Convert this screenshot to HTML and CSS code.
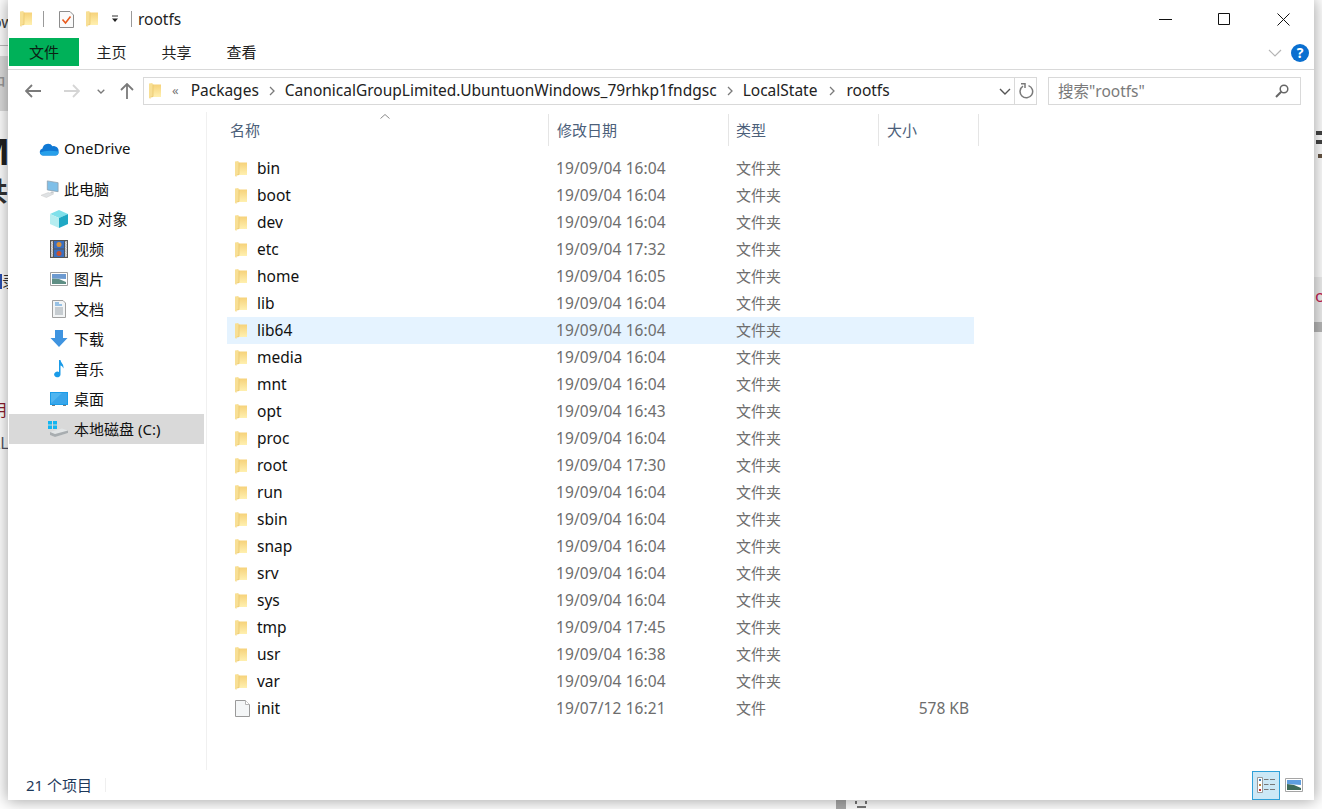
FILE: index.html
```html
<!DOCTYPE html>
<html lang="zh-CN">
<head>
<meta charset="UTF-8">
<title>rootfs</title>
<link rel="stylesheet" href="styles.css">
</head>
<body>

<svg class="defs" width="0" height="0">
    <defs>
        <linearGradient id="folder-fill" x1="0" y1="0" x2="0" y2="1">
            <stop offset="0" stop-color="#f6d27a"/>
            <stop offset="1" stop-color="#fff0b0"/>
        </linearGradient>
        <symbol id="i-folder" viewBox="0 0 12 16">
            <path d="M3 1.500H12V14H3z" fill="url(#folder-fill)"/>
            <path d="M0 .5L3.500 0V1.500H4V13.500L1.500 14.200V16L0 15z" fill="#f8df94"/>
            <path d="M4 1.500V13.500L1.500 14.200" fill="none" stroke="#e8c468" stroke-width=".7"/>
        </symbol>
        <symbol id="i-file" viewBox="0 0 15 17">
            <path d="M.5.5H10.500L14.500 4.500V16.500H.5z" fill="#f4f6f7" stroke="#9a9a9a"/>
            <path d="M10.500.5V4.500H14.500" fill="#fff" stroke="#b5b5b5"/>
        </symbol>
    </defs>
</svg>

<div class="desktop">
    <div class="strip strip-left">
        <span class="frag frag-ow">ow</span>
        <span class="frag-line"></span>
        <span class="frag-band">中</span>
        <span class="frag frag-big">M</span>
        <span class="frag frag-bold">共</span>
        <span class="frag frag-blue">录</span>
        <span class="frag frag-red">用</span>
        <span class="frag frag-al">AL</span>
    </div>

    <div class="window">
        <div class="titlebar">
            <svg class="qa-folder"><use href="#i-folder"/></svg>
            <span class="qa-sep qa-sep-a"></span>
            <svg class="qa-check" viewBox="0 0 15 17">
                <path d="M.5.5H11L14.500 4V16.500H.5z" fill="#fafafa" stroke="#8c8c8c"/>
                <path d="M3.500 8.500L6.500 12L11.500 5.500" fill="none" stroke="#e8591c" stroke-width="1.600"/>
            </svg>
            <svg class="qa-folder qa-folder-b"><use href="#i-folder"/></svg>
            <svg class="qa-drop" viewBox="0 0 8 8">
                <path d="M1 1H7" stroke="#333" stroke-width="1"/>
                <path d="M1 3.500H7L4 7z" fill="#222"/>
            </svg>
            <span class="qa-sep qa-sep-b"></span>
            <span class="title-text">rootfs</span>
            <div class="win-buttons">
                <svg class="win-btn" viewBox="0 0 13 13"><path d="M0 6.500H13" stroke="#111"/></svg>
                <svg class="win-btn" viewBox="0 0 13 13"><path d="M.5.5H11.500V11.500H.5z" fill="none" stroke="#111"/></svg>
                <svg class="win-btn" viewBox="0 0 13 13"><path d="M.5.5L12.500 12.500M12.500.5L.5 12.500" stroke="#111"/></svg>
            </div>
        </div>

        <div class="ribbon">
            <div class="tab tab-file">文件</div>
            <div class="tab">主页</div>
            <div class="tab">共享</div>
            <div class="tab">查看</div>
            <svg class="ribbon-chevron" viewBox="0 0 14 8"><path d="M1 1L7 7L13 1" fill="none" stroke="#b5b5b5" stroke-width="1.200"/></svg>
            <div class="help">?</div>
        </div>

        <div class="address-row">
            <div class="nav-arrows">
                <svg class="arrow" viewBox="0 0 16 14"><path d="M1 7H16M7 1L1 7L7 13" fill="none" stroke="#7a7a7a" stroke-width="1.800"/></svg>
                <svg class="arrow arrow-fwd" viewBox="0 0 16 14"><path d="M0 7H15M9 1L15 7L9 13" fill="none" stroke="#d5d5d5" stroke-width="1.800"/></svg>
                <svg class="arrow-down" viewBox="0 0 8 5"><path d="M.7.7L4 4L7.300.7" fill="none" stroke="#7a7a7a" stroke-width="1.300"/></svg>
                <svg class="arrow-up" viewBox="0 0 14 16"><path d="M7 16V1M1 7L7 1L13 7" fill="none" stroke="#7a7a7a" stroke-width="1.800"/></svg>
            </div>
            <div class="address-box">
                <svg class="addr-folder"><use href="#i-folder"/></svg>
                <span class="crumb-more">«</span>
                <span class="crumb">Packages</span>
                <svg class="crumb-sep" viewBox="0 0 6 10"><path d="M1 1L5 5L1 9" fill="none" stroke="#7a7a7a" stroke-width="1.300"/></svg>
                <span class="crumb">CanonicalGroupLimited.UbuntuonWindows_79rhkp1fndgsc</span>
                <svg class="crumb-sep" viewBox="0 0 6 10"><path d="M1 1L5 5L1 9" fill="none" stroke="#7a7a7a" stroke-width="1.300"/></svg>
                <span class="crumb">LocalState</span>
                <svg class="crumb-sep crumb-sep-last" viewBox="0 0 6 10"><path d="M1 1L5 5L1 9" fill="none" stroke="#7a7a7a" stroke-width="1.300"/></svg>
                <span class="crumb">rootfs</span>
                <div class="address-end">
                    <svg class="addr-down" viewBox="0 0 12 7"><path d="M1 1L6 6L11 1" fill="none" stroke="#555" stroke-width="1.400"/></svg>
                    <div class="addr-refresh">
                        <svg viewBox="0 0 16 16" class="refresh-icon">
                            <path d="M5 3.200A6.300 6.300 0 1 0 10.500 2.600" fill="none" stroke="#7a7a7a" stroke-width="1.500"/>
                            <path d="M3 .8H7V5" fill="none" stroke="#7a7a7a" stroke-width="1.500"/>
                        </svg>
                    </div>
                </div>
            </div>
            <div class="search-box">
                <span class="search-text">搜索"rootfs"</span>
                <svg class="search-icon" viewBox="0 0 14 14">
                    <circle cx="9" cy="5" r="3.800" fill="none" stroke="#666" stroke-width="1.500"/>
                    <path d="M6.200 7.800L1 13" stroke="#666" stroke-width="2"/>
                </svg>
            </div>
        </div>

        <div class="main">
            <div class="nav-pane">
                <div class="nav-item nav-top">
                    <svg class="nav-icon" viewBox="0 0 20 14">
                        <path d="M4 13.500A3.500 3.500 0 0 1 3.500 6.600A5.500 5.500 0 0 1 13.500 4.300A4.600 4.600 0 0 1 19.500 9.500A3.600 3.600 0 0 1 16.500 13.500z" fill="#0f78d4"/>
                        <path d="M1 10.500Q7 7.500 19.500 9.500A3.600 3.600 0 0 1 16.500 13.500H4Q2 13.500 1 10.500z" fill="#28a0ea"/>
                    </svg>
                    <span>OneDrive</span>
                </div>
                <div class="nav-item nav-pc">
                    <svg class="nav-icon" viewBox="0 0 20 20">
                        <path d="M7 1L19 3V13L7 11z" fill="#7fbfe8" stroke="#8a9aa8" stroke-width=".8"/>
                        <path d="M12 12.500L14 13V15L10 14.500z" fill="#c5c9cc"/>
                        <path d="M0 17L8 14L14 15.500L6 19.500z" fill="#dfe2e4" stroke="#c8c8c8" stroke-width=".5"/>
                    </svg>
                    <span>此电脑</span>
                </div>
                <div class="nav-item nav-sub">
                    <svg class="nav-icon" viewBox="0 0 18 18">
                        <path d="M9 0L18 4L9 8L0 4z" fill="#7fe0ea"/>
                        <path d="M0 4L9 8V18L0 14z" fill="#b5edf0"/>
                        <path d="M18 4L9 8V18L18 14z" fill="#1fa8c4"/>
                    </svg>
                    <span>3D 对象</span>
                </div>
                <div class="nav-item nav-sub">
                    <svg class="nav-icon" viewBox="0 0 18 18">
                        <path d="M0 0H18V18H0z" fill="#555"/>
                        <path d="M1 1H3V17H1zM15 1H17V17H15z" fill="#d9d9d9" stroke="#555" stroke-width=".4" stroke-dasharray="1.500 1"/>
                        <path d="M4 1H14V8.500H4z" fill="#3a6fc0"/>
                        <path d="M4 9.500H14V17H4z" fill="#3a6fc0"/>
                        <circle cx="9" cy="4.500" r="2.500" fill="#d8913a"/>
                        <circle cx="9" cy="13.500" r="2.500" fill="#c8502f"/>
                    </svg>
                    <span>视频</span>
                </div>
                <div class="nav-item nav-sub">
                    <svg class="nav-icon" viewBox="0 0 18 14">
                        <path d="M.5.5H17.500V13.500H.5z" fill="#fff" stroke="#a0a0a0"/>
                        <path d="M2 2H16V7L2 6.500z" fill="#6d9ad0"/>
                        <path d="M2 6.500L9 7L16 10V12H2z" fill="#5f8f85"/>
                    </svg>
                    <span>图片</span>
                </div>
                <div class="nav-item nav-sub">
                    <svg class="nav-icon" viewBox="0 0 18 18">
                        <path d="M2.500.5H13L15.500 3V17.500H2.500z" fill="#f2f4f5" stroke="#a0a0a0"/>
                        <path d="M5 3H9M5 5H12" stroke="#3d8ed4"/>
                        <path d="M5 8H13M5 10H13M5 12H13M5 14H13" stroke="#9aa4ac"/>
                    </svg>
                    <span>文档</span>
                </div>
                <div class="nav-item nav-sub">
                    <svg class="nav-icon" viewBox="0 0 18 18">
                        <path d="M5 0H13V8H17.500L9 17L.5 8H5z" fill="#3f94e0"/>
                    </svg>
                    <span>下载</span>
                </div>
                <div class="nav-item nav-sub">
                    <svg class="nav-icon" viewBox="0 0 18 18">
                        <path d="M9 0H10.500C10.800 3 14 4 13.500 8.500C12.500 6.500 11.500 5.500 10.500 5.500V14.500A3.200 2.900 0 1 1 9 12z" fill="#1a9be8"/>
                    </svg>
                    <span>音乐</span>
                </div>
                <div class="nav-item nav-sub">
                    <svg class="nav-icon" viewBox="0 0 18 14">
                        <path d="M0 0H18V13H0z" fill="#1b9ce8"/>
                        <path d="M1 1H17V11.500H1z" fill="#4fb5f0"/>
                        <path d="M1 11.500L12 1H17V11.500z" fill="#39a5ea"/>
                        <path d="M2 13H5V14H2zM13 13H16V14H13z" fill="#7a7a7a"/>
                    </svg>
                    <span>桌面</span>
                </div>
                <div class="nav-item nav-sub is-current">
                    <svg class="nav-icon" viewBox="0 0 20 16">
                        <path d="M0 0H4V3.500H0zM5 0H9V3.500H5zM0 4.500H4V8H0zM5 4.500H9V8H5z" fill="#12b5f0"/>
                        <path d="M2 11L14 7.500L20 9.500V12L7 16L2 14z" fill="#e2e5e6"/>
                        <path d="M2 11L7 13L20 9.500V12L7 16L2 14z" fill="#a8adb0"/>
                    </svg>
                    <span>本地磁盘 (C:)</span>
                </div>
            </div>

            <div class="file-list">
                <div class="list-head">
                    <svg class="sort-caret" viewBox="0 0 10 5"><path d="M.5 4.500L5 .5L9.500 4.500" fill="none" stroke="#8a8a8a"/></svg>
                    <div class="head-cell head-name">名称</div>
                    <div class="head-cell head-date">修改日期</div>
                    <div class="head-cell head-type">类型</div>
                    <div class="head-cell head-size">大小</div>
                </div>
                <div class="rows">
                    <div class="row"><div class="c-name"><svg class="row-icon"><use href="#i-folder"/></svg>bin</div><div class="c-date">19/09/04 16:04</div><div class="c-type">文件夹</div><div class="c-size"></div></div>
                    <div class="row"><div class="c-name"><svg class="row-icon"><use href="#i-folder"/></svg>boot</div><div class="c-date">19/09/04 16:04</div><div class="c-type">文件夹</div><div class="c-size"></div></div>
                    <div class="row"><div class="c-name"><svg class="row-icon"><use href="#i-folder"/></svg>dev</div><div class="c-date">19/09/04 16:04</div><div class="c-type">文件夹</div><div class="c-size"></div></div>
                    <div class="row"><div class="c-name"><svg class="row-icon"><use href="#i-folder"/></svg>etc</div><div class="c-date">19/09/04 17:32</div><div class="c-type">文件夹</div><div class="c-size"></div></div>
                    <div class="row"><div class="c-name"><svg class="row-icon"><use href="#i-folder"/></svg>home</div><div class="c-date">19/09/04 16:05</div><div class="c-type">文件夹</div><div class="c-size"></div></div>
                    <div class="row"><div class="c-name"><svg class="row-icon"><use href="#i-folder"/></svg>lib</div><div class="c-date">19/09/04 16:04</div><div class="c-type">文件夹</div><div class="c-size"></div></div>
                    <div class="row is-hover"><div class="c-name"><svg class="row-icon"><use href="#i-folder"/></svg>lib64</div><div class="c-date">19/09/04 16:04</div><div class="c-type">文件夹</div><div class="c-size"></div></div>
                    <div class="row"><div class="c-name"><svg class="row-icon"><use href="#i-folder"/></svg>media</div><div class="c-date">19/09/04 16:04</div><div class="c-type">文件夹</div><div class="c-size"></div></div>
                    <div class="row"><div class="c-name"><svg class="row-icon"><use href="#i-folder"/></svg>mnt</div><div class="c-date">19/09/04 16:04</div><div class="c-type">文件夹</div><div class="c-size"></div></div>
                    <div class="row"><div class="c-name"><svg class="row-icon"><use href="#i-folder"/></svg>opt</div><div class="c-date">19/09/04 16:43</div><div class="c-type">文件夹</div><div class="c-size"></div></div>
                    <div class="row"><div class="c-name"><svg class="row-icon"><use href="#i-folder"/></svg>proc</div><div class="c-date">19/09/04 16:04</div><div class="c-type">文件夹</div><div class="c-size"></div></div>
                    <div class="row"><div class="c-name"><svg class="row-icon"><use href="#i-folder"/></svg>root</div><div class="c-date">19/09/04 17:30</div><div class="c-type">文件夹</div><div class="c-size"></div></div>
                    <div class="row"><div class="c-name"><svg class="row-icon"><use href="#i-folder"/></svg>run</div><div class="c-date">19/09/04 16:04</div><div class="c-type">文件夹</div><div class="c-size"></div></div>
                    <div class="row"><div class="c-name"><svg class="row-icon"><use href="#i-folder"/></svg>sbin</div><div class="c-date">19/09/04 16:04</div><div class="c-type">文件夹</div><div class="c-size"></div></div>
                    <div class="row"><div class="c-name"><svg class="row-icon"><use href="#i-folder"/></svg>snap</div><div class="c-date">19/09/04 16:04</div><div class="c-type">文件夹</div><div class="c-size"></div></div>
                    <div class="row"><div class="c-name"><svg class="row-icon"><use href="#i-folder"/></svg>srv</div><div class="c-date">19/09/04 16:04</div><div class="c-type">文件夹</div><div class="c-size"></div></div>
                    <div class="row"><div class="c-name"><svg class="row-icon"><use href="#i-folder"/></svg>sys</div><div class="c-date">19/09/04 16:04</div><div class="c-type">文件夹</div><div class="c-size"></div></div>
                    <div class="row"><div class="c-name"><svg class="row-icon"><use href="#i-folder"/></svg>tmp</div><div class="c-date">19/09/04 17:45</div><div class="c-type">文件夹</div><div class="c-size"></div></div>
                    <div class="row"><div class="c-name"><svg class="row-icon"><use href="#i-folder"/></svg>usr</div><div class="c-date">19/09/04 16:38</div><div class="c-type">文件夹</div><div class="c-size"></div></div>
                    <div class="row"><div class="c-name"><svg class="row-icon"><use href="#i-folder"/></svg>var</div><div class="c-date">19/09/04 16:04</div><div class="c-type">文件夹</div><div class="c-size"></div></div>
                    <div class="row"><div class="c-name"><svg class="row-icon row-icon-file"><use href="#i-file"/></svg>init</div><div class="c-date">19/07/12 16:21</div><div class="c-type">文件</div><div class="c-size">578 KB</div></div>
                </div>
            </div>
        </div>

        <div class="statusbar">
            <span class="status-count">21 个项目</span>
            <span class="status-sep"></span>
            <div class="view-buttons">
                <div class="view-btn is-active">
                    <svg viewBox="0 0 19 16" class="view-details">
                        <path d="M.5.5H5.500V15.500H.5z" fill="#fff" stroke="#9a9a9a"/>
                        <path d="M2 2H4V4H2z" fill="#3d7fb8"/>
                        <path d="M2 7H4V9H2z" fill="#b8863d"/>
                        <path d="M2 12H4V14H2z" fill="#c43030"/>
                        <path d="M7 2.500H11.500M13 2.500H18M7 7.500H11.500M13 7.500H18M7 12.500H11.500M13 12.500H18" stroke="#777"/>
                    </svg>
                </div>
                <svg viewBox="0 0 18 14" class="view-thumbs">
                    <path d="M.5.5H17.500V13.500H.5z" fill="#fff" stroke="#a5a5a5"/>
                    <path d="M2 2H16V7L2 6z" fill="#5f9ee0"/>
                    <path d="M2 6L9 7L16 10V12H2z" fill="#3f6b5a"/>
                </svg>
            </div>
        </div>
    </div>

    <div class="strip strip-right">
        <span class="frag-dark frag-d1"></span>
        <span class="frag-dark frag-d2"></span>
        <span class="frag-dark frag-d3"></span>
        <span class="frag-rtint"></span>
        <span class="frag frag-o">o</span>
        <span class="frag-rband"></span>
    </div>
</div>

<div class="strip-bottom">
    <span class="bottom-block"></span>
    <svg class="bottom-icon" viewBox="0 0 13 8"><path d="M1 0V3M11 0V3M2 6H11" stroke="#777" stroke-width="2"/></svg>
</div>

</body>
</html>
```

FILE: styles.css
```css
html {
    box-sizing: border-box;
}

*, *:before, *:after {
    box-sizing: inherit;
}

body {
    margin: 0;
    height: 809px;
    overflow: hidden;
    background: #fff;
    font: 15.500px "Noto Sans", "Noto Sans CJK SC", sans-serif;
    color: #111;
}

svg {
    display: block;
    flex: none;
}

.defs {
    position: absolute;
}

.desktop {
    display: flex;
    height: 800px;
}

/* page behind the window, only slivers of it show */
.strip {
    position: relative;
    width: 8px;
    overflow: hidden;
    background: #fff;
}

.frag {
    position: absolute;
    line-height: 1;
    white-space: nowrap;
}

.frag-ow {
    top: 14px;
    left: -8px;
    font-size: 16px;
    color: #444;
}

.frag-line {
    position: absolute;
    top: 45px;
    left: 0;
    width: 8px;
    height: 1px;
    background: #bbb;
}

.frag-band {
    position: absolute;
    top: 56px;
    left: 0;
    width: 8px;
    height: 55px;
    overflow: hidden;
    background: #dcdcdc;
    color: #999;
    font-size: 20px;
    line-height: 56px;
    text-indent: -14px;
}

.frag-big {
    top: 134px;
    left: -24px;
    font-size: 36px;
    font-weight: 700;
    color: #222;
}

.frag-bold {
    top: 178px;
    left: -18px;
    font-size: 26px;
    font-weight: 700;
    color: #333;
}

.frag-blue {
    top: 274px;
    left: 0;
    font-size: 15px;
    color: #333;
    border-left: 2px solid #2a4fb0;
}

.frag-red {
    top: 402px;
    left: -9px;
    font-size: 16px;
    color: #8c1c2c;
}

.frag-al {
    top: 435px;
    left: -10px;
    font-size: 16px;
    color: #556;
}

.frag-dark {
    position: absolute;
    left: 2px;
    width: 6px;
    height: 4px;
    background: #444;
}

.frag-d1 { top: 131px; }
.frag-d2 { top: 140px; }
.frag-d3 { top: 154px; left: 4px; background: #654; }

.frag-rtint {
    position: absolute;
    top: 277px;
    left: 0;
    width: 8px;
    height: 45px;
    background: #efefef;
}

.frag-o {
    top: 287px;
    left: 1px;
    font-size: 17px;
    color: #c41e56;
}

.frag-rband {
    position: absolute;
    top: 322px;
    left: 0;
    width: 8px;
    height: 10px;
    background: #b8b8b8;
}

.strip-bottom {
    position: relative;
    display: flex;
    height: 9px;
    background: #fff;
}

.bottom-block {
    margin-left: 836px;
    width: 10px;
    height: 9px;
    background: #a9a9a9;
}

.bottom-icon {
    margin: 1px 0 0 9px;
    width: 13px;
    height: 8px;
}

/* window */
.window {
    position: relative;
    z-index: 1;
    width: 1306px;
    height: 800px;
    display: flex;
    flex-direction: column;
    background: #fff;
    box-shadow: 0 0 15px 1px rgba(0, 0, 0, .36);
}

.titlebar {
    height: 38px;
    display: flex;
    align-items: center;
    flex: none;
}

.qa-folder {
    margin-left: 12px;
    width: 12px;
    height: 16px;
}

.qa-folder-b {
    margin-left: 12px;
}

.qa-sep {
    width: 1px;
    height: 16px;
    background: #9a9a9a;
}

.qa-sep-a {
    margin-left: 11px;
}

.qa-check {
    margin-left: 15px;
    width: 15px;
    height: 17px;
}

.qa-drop {
    margin-left: 13px;
    width: 8px;
    height: 8px;
}

.qa-sep-b {
    margin-left: 12px;
}

.title-text {
    margin-left: 6px;
    color: #222;
}

.win-buttons {
    margin-left: auto;
    margin-right: 24px;
    display: flex;
    gap: 46px;
}

.win-btn {
    width: 13px;
    height: 13px;
}

.ribbon {
    height: 32px;
    flex: none;
    display: flex;
    align-items: flex-start;
    padding-left: 1px;
    border-bottom: 1px solid #d9d9d9;
}

.tab {
    font-size: 15px;
    line-height: 29px;
    height: 28px;
    width: 65px;
    text-align: center;
    color: #222;
}

.tab-file {
    width: 70px;
    background: #00b159;
    color: #0c2014;
}

.ribbon-chevron {
    margin: 11px 0 0 auto;
    width: 14px;
    height: 8px;
}

.help {
    margin: 6px 5px 0 9px;
    width: 18px;
    height: 18px;
    border-radius: 50%;
    background: #0a6fd0;
    color: #fff;
    font: 700 14px/18px "Noto Sans", sans-serif;
    text-align: center;
}

.address-row {
    height: 42px;
    flex: none;
    display: flex;
    padding-top: 7px;
}

.nav-arrows {
    width: 135px;
    height: 28px;
    display: flex;
    align-items: center;
    padding-left: 17px;
}

.arrow {
    width: 16px;
    height: 14px;
}

.arrow-fwd {
    margin-left: 23px;
}

.arrow-down {
    margin-left: 17px;
    width: 8px;
    height: 5px;
}

.arrow-up {
    margin-left: 15px;
    width: 14px;
    height: 16px;
}

.address-box {
    width: 894px;
    height: 28px;
    display: flex;
    align-items: center;
    border: 1px solid #d9d9d9;
    padding-left: 5px;
    color: #222;
}

.addr-folder {
    width: 12px;
    height: 16px;
}

.crumb {
    padding-bottom: 2px;
}

.crumb-more {
    margin: 0 12px 0 11px;
    padding-bottom: 2px;
    color: #777;
    font-size: 13px;
}

.crumb-sep {
    margin: 0 10px;
    width: 6px;
    height: 10px;
}

.crumb-sep-last {
    margin: 0 11px 0 12px;
}

.address-end {
    margin-left: auto;
    height: 26px;
    display: flex;
    align-items: center;
}

.addr-down {
    margin-right: 3px;
    width: 12px;
    height: 7px;
}

.addr-refresh {
    width: 22px;
    height: 26px;
    border-left: 1px solid #d9d9d9;
    display: flex;
    align-items: center;
    justify-content: center;
}

.refresh-icon {
    width: 16px;
    height: 16px;
}

.search-box {
    margin-left: 11px;
    width: 253px;
    height: 28px;
    display: flex;
    align-items: center;
    justify-content: space-between;
    border: 1px solid #d9d9d9;
    padding: 0 11px 0 9px;
    color: #7a7a7a;
}

.search-text {
    padding-bottom: 2px;
}

.search-icon {
    width: 14px;
    height: 14px;
}

.main {
    flex: 1;
    display: flex;
    min-height: 0;
}

.nav-pane {
    width: 199px;
    flex: none;
    border-right: 1px solid #f0f0f0;
    padding: 22px 2px 0 1px;
    color: #111;
    font-size: 15px;
}

.nav-item {
    height: 30px;
    display: flex;
    align-items: center;
}

.nav-item span {
    padding-bottom: 2px;
}

.nav-top {
    padding-left: 30px;
    margin-bottom: 10px;
}

.nav-pc {
    padding-left: 31px;
}

.nav-sub {
    padding-left: 41px;
}

.nav-icon {
    width: 18px;
    height: 18px;
    margin-right: 6px;
}

.nav-top .nav-icon {
    width: 20px;
    margin-right: 5px;
}

.nav-pc .nav-icon {
    width: 20px;
    margin-right: 4px;
}

.is-current {
    background: #d9d9d9;
    padding-left: 39px;
}

.is-current .nav-icon {
    width: 20px;
}

.file-list {
    flex: 1;
    min-width: 0;
}

.list-head {
    position: relative;
    height: 35px;
    margin-left: 15px;
    padding-top: 2px;
    display: flex;
    font-size: 15px;
    color: #4c607a;
}

.sort-caret {
    position: absolute;
    top: 2px;
    left: 158px;
    width: 10px;
    height: 5px;
}

.head-cell {
    height: 32px;
    line-height: 32px;
    padding-left: 8px;
    border-right: 1px solid #e5e5e5;
}

.head-name { width: 327px; }
.head-date { width: 180px; }
.head-type { width: 150px; padding-left: 7px; }
.head-size { width: 100px; }

.rows {
    margin: 8px 0 0 20px;
    width: 747px;
}

.row {
    height: 27px;
    display: grid;
    grid-template-columns: 329px 180px 151px 87px;
    align-items: center;
}

.row > div {
    padding-bottom: 2px;
}

.row.is-hover {
    background: #e5f3ff;
}

.c-name {
    display: flex;
    align-items: center;
    padding-left: 8px;
    color: #111;
}

.row-icon {
    width: 12px;
    height: 16px;
    margin: 2px 10px 0 0;
}

.row-icon-file {
    width: 15px;
    height: 17px;
    margin-right: 7px;
}

.c-date,
.c-type,
.c-size {
    color: #6d6d6d;
}

.c-date {
    letter-spacing: .1px;
}

.c-type {
    font-size: 15px;
}

.c-size {
    text-align: right;
    padding-right: 5px;
}

.statusbar {
    height: 30px;
    flex: none;
    display: flex;
    align-items: center;
    padding-left: 18px;
    font-size: 15px;
    color: #1e395b;
}

.status-count {
    padding-bottom: 2px;
}

.status-sep {
    margin-left: 13px;
    width: 1px;
    height: 14px;
    background: #efefef;
}

.view-buttons {
    margin-left: auto;
    margin-right: 11px;
    display: flex;
    align-items: center;
    gap: 5px;
}

.view-btn {
    width: 28px;
    height: 29px;
    display: flex;
    align-items: center;
    justify-content: center;
}

.view-btn.is-active {
    background: #cce8f6;
    border: 1px solid #2fa0d8;
}

.view-details {
    width: 19px;
    height: 16px;
}

.view-thumbs {
    width: 18px;
    height: 14px;
}
```
